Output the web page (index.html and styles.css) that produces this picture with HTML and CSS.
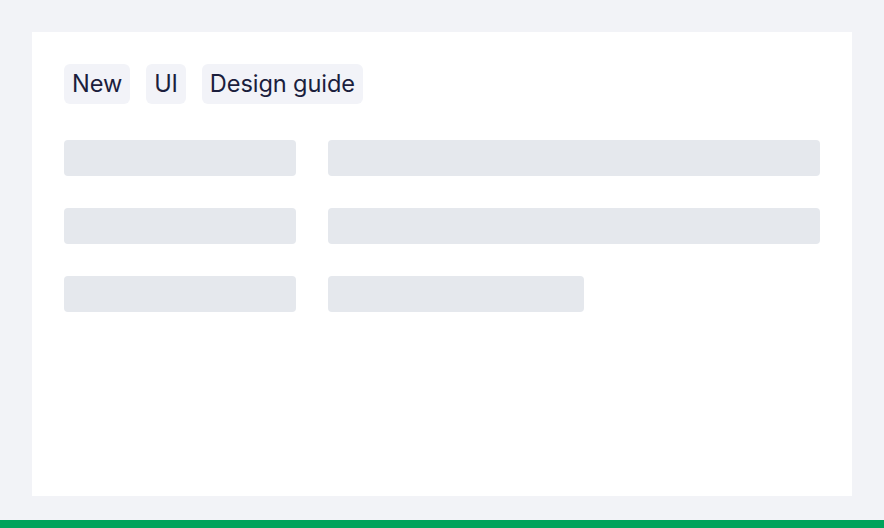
FILE: index.html
```html
<!DOCTYPE html>
<html lang="en">
<head>
  <meta charset="UTF-8">
  <title>Skeleton card</title>
  <link rel="stylesheet" href="styles.css">
</head>
<body>
  <main class="card">
    <div class="tags">
      <span class="tag">New</span>
      <span class="tag">UI</span>
      <span class="tag">Design guide</span>
    </div>

    <div class="skeleton">
      <div class="bar"></div>
      <div class="bar"></div>
      <div class="bar"></div>
      <div class="bar"></div>
      <div class="bar"></div>
      <div class="bar short"></div>
    </div>
  </main>

  <footer class="footer-line"></footer>
</body>
</html>
```

FILE: styles.css
```css
html, body {
  margin: 0;
  padding: 0;
  height: 100%;
}

body {
  background: #f2f3f7;
  font-family: Inter, 'Noto Sans', sans-serif;
  display: flex;
  flex-direction: column;
  padding: 32px 32px 0;
  box-sizing: border-box;
}

.card {
  background: #fff;
  height: 464px;
  padding: 32px;
  box-sizing: border-box;
}

.tags {
  display: flex;
  gap: 16px;
}

.tag {
  height: 40px;
  line-height: 40px;
  padding: 0 8px;
  border-radius: 6px;
  background: #f2f3f8;
  color: #1b1e3d;
  font-size: 23.6px;
  letter-spacing: -0.1px;
}

.skeleton {
  margin-top: 36px;
  display: grid;
  grid-template-columns: 232px 1fr;
  grid-auto-rows: 36px;
  gap: 32px;
}

.bar {
  background: #e5e8ed;
  border-radius: 4px;
}

.bar.short {
  width: 256px;
}

.footer-line {
  margin: auto -32px 0;
  height: 8px;
  background: #00a35c;
}
```
